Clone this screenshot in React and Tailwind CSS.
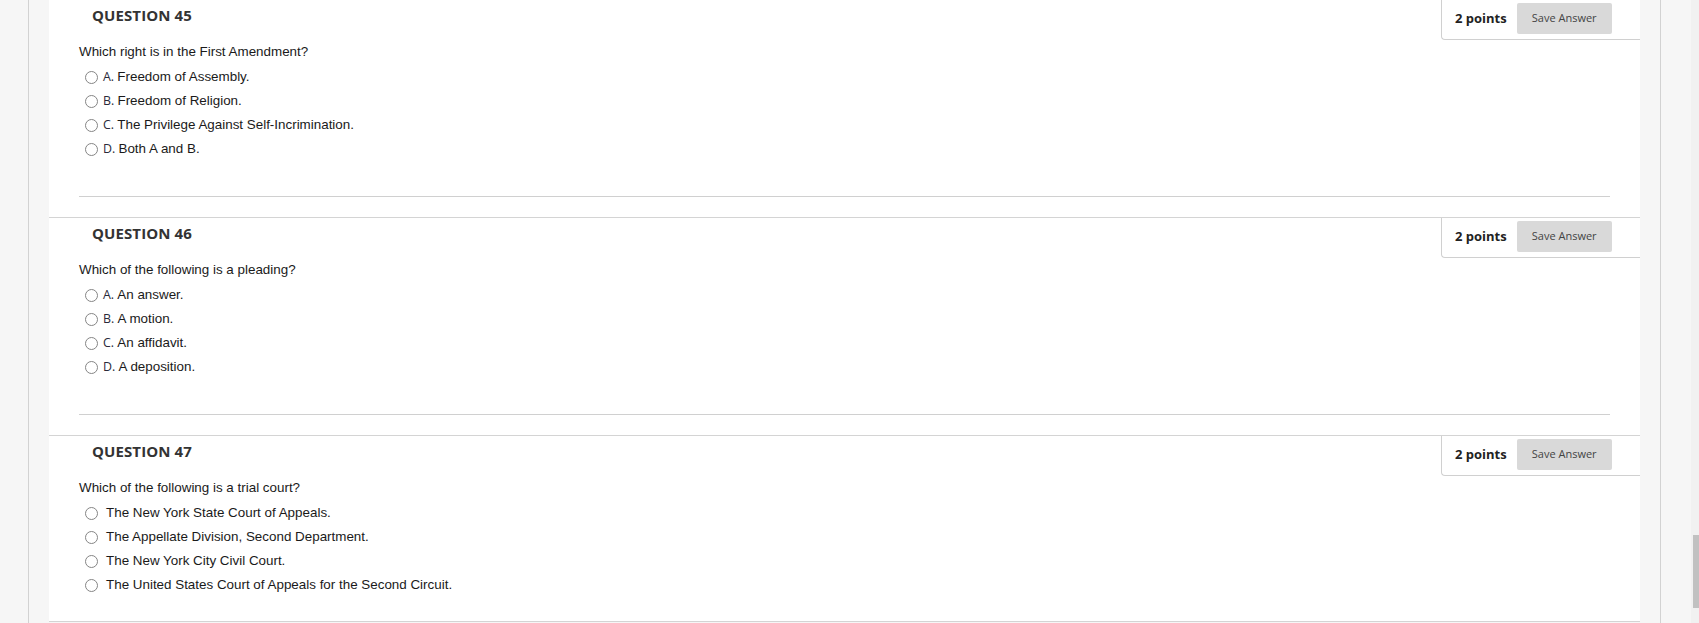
import React from 'react'

const questions = [
  {
    num: 45,
    text: 'Which right is in the First Amendment?',
    lettered: true,
    options: [
      ['A.', 'Freedom of Assembly.'],
      ['B.', 'Freedom of Religion.'],
      ['C.', 'The Privilege Against Self-Incrimination.'],
      ['D.', 'Both A and B.'],
    ],
  },
  {
    num: 46,
    text: 'Which of the following is a pleading?',
    lettered: true,
    options: [
      ['A.', 'An answer.'],
      ['B.', 'A motion.'],
      ['C.', 'An affidavit.'],
      ['D.', 'A deposition.'],
    ],
  },
  {
    num: 47,
    text: 'Which of the following is a trial court?',
    lettered: false,
    options: [
      [null, 'The New York State Court of Appeals.'],
      [null, 'The Appellate Division, Second Department.'],
      [null, 'The New York City Civil Court.'],
      [null, 'The United States Court of Appeals for the Second Circuit.'],
    ],
  },
]

function Radio() {
  return <span className="w-[13px] h-[13px] rounded-full border border-[#858585] bg-white shrink-0" />
}

function Question({ q, first }) {
  return (
    <div className={`shrink-0 h-[218px] border-t border-[#d4d4d4] flex flex-col ${first ? '-mt-px' : ''}`}>
      {/* Header */}
      <div className="h-[40px] flex justify-between">
        <h2 className="pl-[43px] pt-[5px] font-['Open_Sans'] font-bold text-[15px] leading-[20px] text-[#333] tracking-[0.1px]">
          QUESTION {q.num}
        </h2>
        <div className="w-[199px] h-[40px] border-l border-b border-[#d0d0d0] rounded-bl-[4px] flex items-start pt-[3px] pl-[13px]">
          <span className="h-[31px] flex items-center font-['Open_Sans'] font-bold text-[13px] text-[#222]">2 points</span>
          <button className="ml-[10px] w-[95px] h-[31px] bg-[#d9d9d9] rounded-[2px] font-['Open_Sans'] text-[11px] text-[#444] flex items-center justify-center">
            Save Answer
          </button>
        </div>
      </div>

      {/* Body */}
      <div className="pl-[30px] font-['Liberation_Sans',Arial,sans-serif] text-[13.4px] text-[#1a1a1a]">
        <p className="h-[25px] leading-[23px]">{q.text}</p>
        {q.options.map(([letter, label]) => (
          <div key={label} className={`h-[24px] flex items-center pl-[6px] ${q.lettered ? 'gap-[5px]' : 'gap-[8px]'}`}>
            <Radio />
            <span className="whitespace-nowrap">
              {letter && <span className="font-['Open_Sans'] text-[12.4px] text-[#2a2a3a]">{letter} </span>}
              {label}
            </span>
          </div>
        ))}
      </div>

      <div className="mt-[35px] mx-[30px] h-px bg-[#d0d0d0]" />
    </div>
  )
}

export default function App() {
  return (
    <div className="w-[1699px] h-[623px] flex bg-[#f6f6f6] overflow-hidden">
      <div className="w-[28px] shrink-0" />
      <div className="w-px shrink-0 bg-[#d2d2d2]" />
      <div className="w-[20px] shrink-0" />

      {/* Main panel */}
      <div className="w-[1591px] shrink-0 flex flex-col">
        <div className="h-[621px] bg-white overflow-hidden flex flex-col">
          {questions.map((q, i) => (
            <Question key={q.num} q={q} first={i === 0} />
          ))}
        </div>
        <div className="h-px bg-[#d4d4d4]" />
      </div>

      <div className="w-[20px] shrink-0" />
      <div className="w-px shrink-0 bg-[#d2d2d2]" />
      <div className="w-[30px] shrink-0" />

      {/* Scrollbar */}
      <div className="w-[8px] shrink-0 bg-[#f1f1f1] flex flex-col">
        <div className="mt-[535px] ml-[2px] w-[6px] h-[73px] bg-[#c1c1c1]" />
      </div>
    </div>
  )
}
